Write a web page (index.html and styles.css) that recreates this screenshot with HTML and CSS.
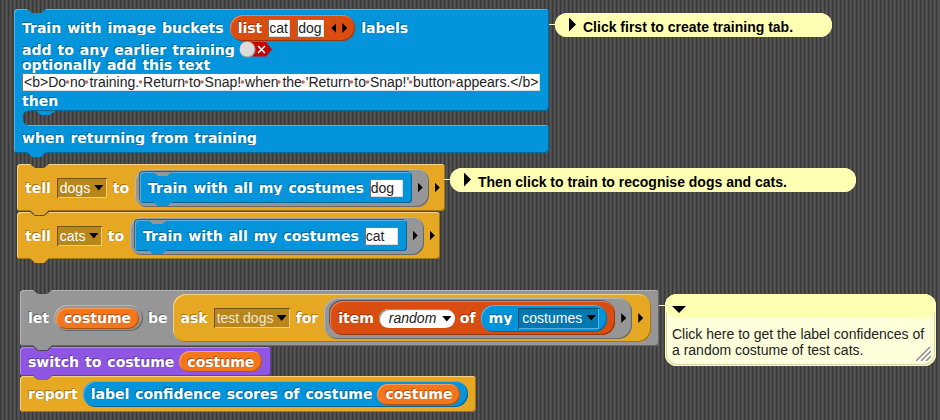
FILE: index.html
```html
<!DOCTYPE html>
<html lang="en">
<head>
<meta charset="utf-8">
<title>Snap! scripts</title>
<link rel="stylesheet" href="styles.css">
</head>
<body>
<main class="canvas">

  <section class="script script-train">
    <div class="block sensing head has-notch">
      <div class="row row-labels">
        <span class="words"><span>Train</span> <span>with</span> <span>image</span> <span>buckets</span></span>
        <span class="pill lists">
          <span class="words">list</span>
          <input class="slot slot-s" aria-label="label 1" value="cat">
          <input class="slot slot-m" aria-label="label 2" value="dog">
          <span class="arrows"><button class="arrow left" aria-label="remove"></button><button class="arrow" aria-label="add"></button></span>
        </span>
        <span class="words">labels</span>
      </div>
      <label class="row row-toggle">
        <span class="words"><span>add</span> <span>to</span> <span>any</span> <span>earlier</span> <span>training</span></span>
        <span class="toggle">
          <input type="checkbox">
          <svg viewBox="0 0 33 17" width="33" height="17" aria-hidden="true">
            <path d="M8 1H27L33 8.500L27 15.500H8Z" fill="#cb0000"/>
            <path d="M19 5L26 12M26 5L19 12" stroke="#fff" stroke-width="1.500"/>
            <circle cx="8.500" cy="8.500" r="8" fill="#a9a9a9"/>
            <circle cx="8" cy="8" r="7.300" fill="#dcdcdc"/>
          </svg>
        </span>
      </label>
      <label class="field">
        <span class="words"><span>optionally</span> <span>add</span> <span>this</span> <span>text</span></span>
        <span class="long">
          <input class="slot slot-long" value="&lt;b&gt;Do no training. Return to Snap! when the 'Return to Snap!' button appears.&lt;/b&gt;">
          <svg class="dots" viewBox="0 0 518 18" width="518" height="18" aria-hidden="true" fill="#b87070">
            <circle cx="45.500" cy="9" r="1.800"/><circle cx="64.500" cy="9" r="1.800"/><circle cx="118.500" cy="9" r="1.800"/><circle cx="164.500" cy="9" r="1.800"/><circle cx="180" cy="9" r="1.800"/><circle cx="220.500" cy="9" r="1.800"/><circle cx="257" cy="9" r="1.800"/><circle cx="281" cy="9" r="1.800"/><circle cx="329.500" cy="9" r="1.800"/><circle cx="345.500" cy="9" r="1.800"/><circle cx="388.500" cy="9" r="1.800"/><circle cx="431.500" cy="9" r="1.800"/>
          </svg>
        </span>
      </label>
      <span class="words then">then</span>
    </div>
    <div class="c-slot sensing"><div class="c-mouth"></div></div>
    <div class="block sensing foot has-tab">
      <span class="words"><span>when</span> <span>returning</span> <span>from</span> <span>training</span></span>
    </div>
  </section>

  <section class="script script-tell">
    <div class="block control tell has-notch has-tab">
      <span class="words">tell</span>
      <span class="drop"><select aria-label="sprite"><option>dogs</option></select></span>
      <span class="words">to</span>
      <span class="ring cmd-ring">
        <span class="block sensing inner has-notch has-tab">
          <span class="words"><span>Train</span> <span>with</span> <span>all</span> <span>my</span> <span>costumes</span></span>
          <input class="slot slot-l" aria-label="label" value="dog">
        </span>
        <button class="arrow" aria-label="add input"></button>
      </span>
      <button class="arrow" aria-label="add argument"></button>
    </div>
    <div class="block control tell has-notch has-tab">
      <span class="words">tell</span>
      <span class="drop"><select aria-label="sprite"><option>cats</option></select></span>
      <span class="words">to</span>
      <span class="ring cmd-ring">
        <span class="block sensing inner has-notch has-tab">
          <span class="words"><span>Train</span> <span>with</span> <span>all</span> <span>my</span> <span>costumes</span></span>
          <input class="slot slot-l" aria-label="label" value="cat">
        </span>
        <button class="arrow" aria-label="add input"></button>
      </span>
      <button class="arrow" aria-label="add argument"></button>
    </div>
  </section>

  <section class="script script-let">
    <div class="block other let has-notch has-tab">
      <span class="words">let</span>
      <span class="ring var-ring"><span class="pill variable"><span class="words">costume</span></span></span>
      <span class="words">be</span>
      <span class="pill control ask">
        <span class="words">ask</span>
        <span class="drop faded"><select aria-label="sprite"><option>test dogs</option></select></span>
        <span class="words">for</span>
        <span class="ring rep-ring">
          <span class="pill lists item">
            <span class="words">item</span>
            <span class="drop oval"><select aria-label="index"><option>random</option></select></span>
            <span class="words">of</span>
            <span class="pill sensing my">
              <span class="words">my</span>
              <span class="drop blue"><select aria-label="attribute"><option>costumes</option></select></span>
            </span>
          </span>
          <button class="arrow" aria-label="add input"></button>
        </span>
        <button class="arrow" aria-label="add argument"></button>
      </span>
    </div>
    <div class="block looks switch has-notch has-tab">
      <span class="words"><span>switch</span> <span>to</span> <span>costume</span></span>
      <span class="pill variable"><span class="words">costume</span></span>
    </div>
    <div class="block control report has-notch">
      <span class="words">report</span>
      <span class="pill sensing scores">
        <span class="words"><span>label</span> <span>confidence</span> <span>scores</span> <span>of</span> <span>costume</span></span>
        <span class="pill variable"><span class="words">costume</span></span>
      </span>
    </div>
  </section>

  <aside class="comment comment-first">
    <button class="title"><span class="mark"></span>Click first to create training tab.</button>
  </aside>
  <aside class="comment comment-then">
    <button class="title"><span class="mark"></span>Then click to train to recognise dogs and cats.</button>
  </aside>
  <aside class="comment comment-open">
    <button class="title" aria-label="collapse"><span class="mark down"></span></button>
    <p>Click here to get the label confidences of a random costume of test cats.</p>
    <svg class="grip" viewBox="0 0 15 15" width="15" height="15" aria-hidden="true">
      <path d="M2 15L15 2M7 15L15 7M12 15L15 12" stroke="#fff" stroke-width="1.500"/>
      <path d="M0 15L14 1M5 15L15 5M10 15L15 10" stroke="#8c8c8c" stroke-width="1.500"/>
    </svg>
  </aside>
</main>
</body>
</html>
```

FILE: styles.css
```css
:root {
  --stripes: repeating-linear-gradient(90deg, #383838 0 1px, #484848 1px 2px, #555 2px 3px, #4c4c4c 3px 4px);
}

* { box-sizing: border-box; }

body {
  margin: 0;
  background: var(--stripes) fixed;
  font: 14px/16px "Liberation Sans", sans-serif;
}

button, input, select {
  margin: 0;
  padding: 0;
  border: 0;
  border-radius: 0;
  font: inherit;
}

.canvas {
  position: relative;
  min-height: 100vh;
  overflow: hidden;
}

/* Scripts and comments are placed freely on the canvas */
.script, .comment { position: absolute; }
.script { display: flex; flex-direction: column; align-items: flex-start; }
.script-train { left: 14px; top: 9px; align-items: stretch; }
.script-tell { left: 17px; top: 164px; }
.script-let { left: 20px; top: 290px; }

.sensing { --c: #0494dc; --hi: #4fb4e7; --lo: #02689a; }
.control { --c: #e6a822; --hi: #f7d282; --lo: #a17617; }
.lists { --c: #d94d11; --hi: #e88258; --lo: #98360c; }
.variable { --c: #f3761d; --hi: #f79f61; --lo: #aa5214; }
.other { --c: #969696; --hi: #b6b6b6; --lo: #696969; }
.looks { --c: #8f56e3; --hi: #b188eb; --lo: #643c9f; }

.block, .pill {
  position: relative;
  display: flex;
  align-items: center;
  gap: 5px;
  background: var(--c);
  box-shadow: inset 1px 1px 0 var(--hi), inset -1px -1px 0 var(--lo);
}
.block { border-radius: 4px; padding: 0 8px; }
.pill { border-radius: 13px; padding: 0 8px; }

.has-notch::before, .has-tab::after {
  content: "";
  position: absolute;
  left: 13px;
  width: 19px;
  height: 4px;
  clip-path: polygon(0 0, 100% 0, 14px 100%, 5px 100%);
}
.has-notch::before { top: 0; background: var(--stripes) fixed; }
.has-tab::after { top: calc(100% - 1px); height: 5px; background: var(--c); z-index: 1; }

.words {
  display: flex;
  gap: 6px;
  overflow: hidden;
  color: #fff;
  font: bold 14px/14px "DejaVu Sans", sans-serif;
  text-shadow: -1px -1px 0 var(--lo);
  white-space: nowrap;
}

.slot {
  height: 18px;
  padding: 0 1px;
  background: #fff;
  color: #222;
  box-shadow: inset 1px 1px 0 #777, inset -1px -1px 0 #ddd;
}
.slot-s { width: 22px; }
.slot-m { width: 27px; }
.slot-l { width: 33px; }
.slot-long { width: 100%; padding: 0 2px; display: block; }

.arrows { display: flex; gap: 6px; }
.arrow {
  width: 5px;
  height: 10px;
  background: #000;
  clip-path: polygon(0 0, 100% 50%, 0 100%);
}
.arrow.left { clip-path: polygon(100% 0, 0 50%, 100% 100%); }

/* Custom C-shaped block */
.head {
  flex-direction: column;
  align-items: flex-start;
  gap: 0;
  padding: 6px 9px 3px 8px;
  border-bottom-left-radius: 0;
}
.row { display: flex; align-items: center; gap: 6px; }
.row-labels .pill { height: 26px; padding: 0 8px; gap: 7px; }
.row-labels .slot-s { margin-left: -1px; }
.row-toggle { height: 17px; gap: 4px; }
.toggle { position: relative; display: block; height: 17px; }
.toggle input { appearance: none; position: absolute; inset: 0; }
.toggle svg { display: block; }
.field { display: flex; flex-direction: column; }
.field .words { line-height: 15px; }
.long { position: relative; width: 518px; }
.dots { position: absolute; left: 0; top: 0; pointer-events: none; }
.then { margin-top: 3px; }
.c-slot { position: relative; z-index: 1; height: 14px; padding-left: 9px; }
.c-slot::before {
  content: "";
  position: absolute;
  left: 0;
  top: -1px;
  bottom: -1px;
  width: 14px;
  background: var(--c);
  box-shadow: inset 1px 0 0 var(--hi);
}
.c-mouth { position: relative; height: 14px; background: var(--stripes) fixed; border-radius: 5px 0 0 5px; }
.c-mouth::before {
  content: "";
  position: absolute;
  left: 13px;
  top: 0;
  width: 19px;
  height: 4px;
  background: var(--c);
  clip-path: polygon(0 0, 100% 0, 14px 100%, 5px 100%);
}
.foot { height: 28px; padding-bottom: 2px; border-top-left-radius: 0; }

/* Drop-downs */
.drop { position: relative; display: flex; height: 20px; background: #b8861b; box-shadow: inset 1px 1px 0 #735411, inset -1px -1px 0 #f0cb7a; }
.drop select {
  appearance: none;
  padding: 0 16px 0 3px;
  background: none;
  color: #fff;
}
.drop::after {
  content: "";
  position: absolute;
  right: 3px;
  top: 7px;
  width: 10px;
  height: 6px;
  background: #000;
  clip-path: polygon(0 0, 100% 0, 50% 100%);
  pointer-events: none;
}
.faded select { color: #f1e7d1; }
.blue { height: 21px; background: #0377b0; box-shadow: inset 1px 1px 0 #024a6e, inset -1px -1px 0 #4fb4e7; }
.blue select { padding: 0 17px 0 4px; }
.oval { height: 19px; border-radius: 10px; background: #fff; box-shadow: inset 1px 1px 1px #888; }
.oval select { color: #222; font-style: italic; padding: 0 18px 0 10px; }

/* Rings */
.ring {
  display: flex;
  align-items: center;
  gap: 6px;
  background: #969696;
  box-shadow: inset 1px 1px 0 #b6b6b6, inset -1px -1px 0 #696969;
}
.cmd-ring { height: 38px; padding: 0 6px 0 5px; border-radius: 12px; }
.var-ring { height: 26px; padding: 0 4px 0 2px; border-radius: 13px; }
.rep-ring { height: 41px; padding: 0 6px 0 6px; border-radius: 14px; }

.tell { height: 47px; gap: 6px; padding-right: 5px; }
.tell + .tell { margin-top: 1px; }
.inner { height: 31px; gap: 6px; padding-right: 9px; box-shadow: inset 1px 1px 0 var(--hi), inset -1px -1px 0 var(--lo), -1px -1px 0 #555; }
.inner.has-notch::before { background: #969696; }
.inner.has-tab::after { height: 4px; }

.variable { height: 21px; }
.let { height: 56px; }
.ask { height: 48px; gap: 6px; }
.item { height: 34px; box-shadow: inset 1px 1px 0 var(--hi), inset -1px -1px 0 var(--lo), -1px -1px 0 #555; }
.my { height: 27px; gap: 6px; }
.switch { height: 29px; margin-top: 1px; padding-right: 9px; }
.report { height: 36px; }
.scores { height: 26px; }

/* Comments */
.comment { border-radius: 12px; background: #ffffb4; color: #000; }
.comment::before {
  content: "";
  position: absolute;
  right: 100%;
  top: 11px;
  width: 6px;
  height: 1px;
  background: #ffffb4;
}
.comment-first { left: 555px; top: 13px; width: 277px; }
.comment-then { left: 450px; top: 168px; width: 406px; }
.comment-open { left: 665px; top: 294px; width: 271px; background: #ffffdc; box-shadow: inset 0 0 0 1px #ffffb4, inset 0 0 0 2px #d6d6a8; }
.title {
  display: flex;
  align-items: center;
  gap: 7px;
  width: 100%;
  height: 24px;
  padding: 3px 14px 0;
  border-radius: 12px;
  background: #ffffb4;
  color: #000;
  font-weight: bold;
  font-size: 14px;
  white-space: nowrap;
}
.mark { width: 7px; height: 14px; margin-top: -4px; background: #000; clip-path: polygon(0 0, 100% 50%, 0 100%); }
.mark.down { width: 14px; height: 7px; margin-top: 4px; clip-path: polygon(0 0, 100% 0, 50% 100%); }
.comment-open .title { padding: 3px 7px 0; }
.comment p { margin: 0; padding: 8px 7px; color: #222; }
.grip { position: absolute; right: 5px; bottom: 5px; }
```
